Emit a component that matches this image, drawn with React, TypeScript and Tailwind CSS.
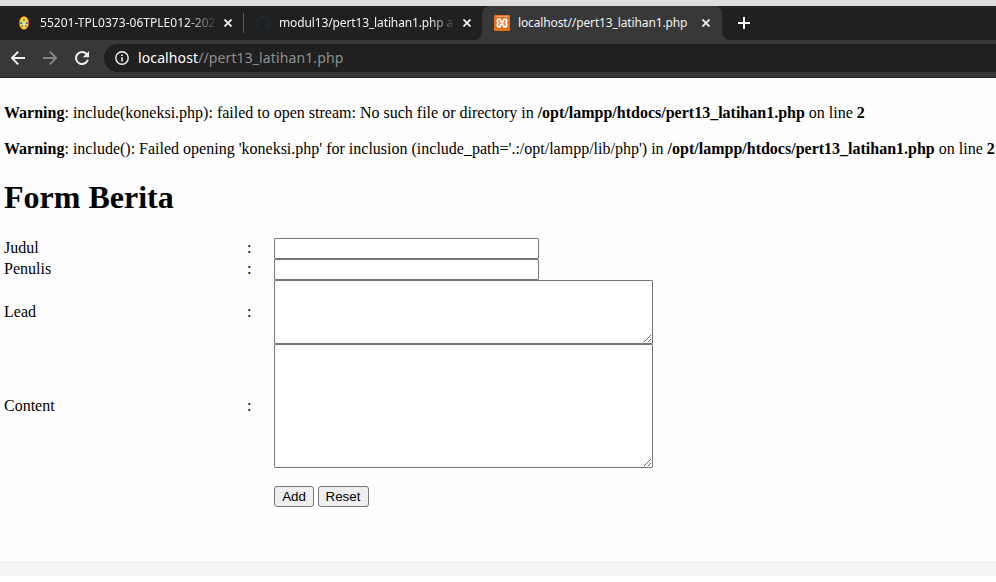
import React from "react";

function CloseIcon() {
  return (
    <svg width="8" height="8" viewBox="0 0 8 8" className="shrink-0">
      <path d="M0.5 0.5 7.5 7.5M7.5 0.5 0.5 7.5" stroke="#f1f1f1" strokeWidth="1.8" fill="none" />
    </svg>
  );
}

function CampusIcon() {
  return (
    <svg width="12" height="16" viewBox="0 0 12 16" className="shrink-0">
      <ellipse cx="6" cy="8" rx="4.8" ry="6.6" fill="#f7e60a" stroke="#cf4526" strokeWidth="0.9" />
      <path d="M6 3.2 8 5.4 10 8 8 10.8 6 13 4 10.8 2 8 4 5.4Z" fill="#d5dc8a" />
      <rect x="5" y="4" width="2" height="1.6" fill="#6d64a8" />
      <rect x="2" y="7.2" width="2" height="1.8" fill="#6a6fb8" />
      <rect x="8" y="7.2" width="2" height="1.8" fill="#6a6fb8" />
      <rect x="3.2" y="10.6" width="1.8" height="1.6" fill="#86708f" />
      <rect x="7" y="10.6" width="1.8" height="1.6" fill="#86708f" />
      <circle cx="6" cy="8" r="1.4" fill="#c5e36a" />
    </svg>
  );
}

function GithubIcon() {
  return (
    <svg width="16" height="16" viewBox="0 0 16 16" className="shrink-0">
      <path
        fill="#20282e"
        d="M8 0C3.58 0 0 3.58 0 8c0 3.54 2.29 6.53 5.47 7.59.4.07.55-.17.55-.38 0-.19-.01-.82-.01-1.49-2.01.37-2.53-.49-2.69-.94-.09-.23-.48-.94-.82-1.13-.28-.15-.68-.52-.01-.53.63-.01 1.08.58 1.23.82.72 1.21 1.87.87 2.33.66.07-.52.28-.87.51-1.07-1.78-.2-3.64-.89-3.64-3.95 0-.87.31-1.59.82-2.15-.08-.2-.36-1.02.08-2.12 0 0 .67-.21 2.2.82.64-.18 1.32-.27 2-.27s1.36.09 2 .27c1.53-1.04 2.2-.82 2.2-.82.44 1.1.16 1.92.08 2.12.51.56.82 1.27.82 2.15 0 3.07-1.87 3.75-3.65 3.95.29.25.54.73.54 1.48 0 1.07-.01 1.93-.01 2.2 0 .21.15.46.55.38A8.01 8.01 0 0 0 16 8c0-4.42-3.58-8-8-8Z"
      />
    </svg>
  );
}

function XamppIcon() {
  return (
    <svg width="16" height="16" viewBox="0 0 16 16" className="shrink-0">
      <rect width="16" height="16" rx="1" fill="#ea6c1d" />
      <path d="M2 1.4h12" stroke="#f7b98f" strokeWidth="0.8" />
      <path
        d="M6.6 6.2C6.6 4.8 6 4.2 5.1 4.2 2.9 4.2 2.7 7 4.3 8.1 2.7 9.2 2.9 12 5.1 12 6 12 6.6 11.4 6.6 10M9.4 6.2C9.4 4.8 10 4.2 10.9 4.2 13.1 4.2 13.3 7 11.7 8.1 13.3 9.2 13.1 12 10.9 12 10 12 9.4 11.4 9.4 10M6.2 6.4C6.6 7.2 9.4 7.2 9.8 6.4M6.2 9.8C6.6 9 9.4 9 9.8 9.8"
        fill="none"
        stroke="#fff"
        strokeWidth="1.8"
        strokeLinejoin="round"
      />
    </svg>
  );
}

function TabBar() {
  return (
    <div className="flex h-[34px] items-center bg-[#202020] text-[12px] leading-[16px] tracking-[-0.13px] text-[#f1f1f1]">
      <div className="flex w-[243px] shrink-0 items-center pl-[18px]">
        <CampusIcon />
        <span className="ml-[10px] w-[176px] whitespace-nowrap tracking-[0.02px] [mask-image:linear-gradient(to_right,black_146px,transparent_178px)]">
          55201-TPL0373-06TPLE012-202
        </span>
        <span className="ml-2 flex"><CloseIcon /></span>
      </div>
      <div className="h-5 w-px shrink-0 bg-[#5a5a5a]" />
      <div className="flex w-[238px] shrink-0 items-center pl-[11px]">
        <GithubIcon />
        <span className="ml-2 w-[176px] whitespace-nowrap [mask-image:linear-gradient(to_right,black_150px,transparent_178px)]">
          modul13/pert13_latihan1.php a
        </span>
        <span className="ml-[8px] flex"><CloseIcon /></span>
      </div>
      <div className="relative flex h-full w-[240px] shrink-0 items-center rounded-t-[8px] bg-[#383838] pl-3">
        <div className="absolute bottom-0 -left-2 size-2 bg-[radial-gradient(circle_at_0_0,#202020_7.5px,#383838_8.5px)]" />
        <div className="absolute -right-2 bottom-0 size-2 bg-[radial-gradient(circle_at_100%_0,#202020_7.5px,#383838_8.5px)]" />
        <XamppIcon />
        <span className="ml-2 w-[176px] whitespace-nowrap">localhost//pert13_latihan1.php</span>
        <span className="ml-2 flex"><CloseIcon /></span>
      </div>
      <svg width="12" height="12" viewBox="0 0 12 12" className="ml-4 shrink-0">
        <path d="M6 0v12M0 6h12" stroke="#fff" strokeWidth="2" />
      </svg>
    </div>
  );
}

function Toolbar() {
  return (
    <div className="flex h-[38px] items-start border-b border-[#242424] bg-[#383838] pt-1">
      <div className="flex h-7 w-[104px] shrink-0 items-center pl-[11px]">
        <svg width="14" height="14" viewBox="0 0 14 14">
          <path d="M14 7H1M7.2.7.9 7l6.3 6.3" fill="none" stroke="#f1f1f1" strokeWidth="1.9" />
        </svg>
        <svg width="14" height="14" viewBox="0 0 14 14" className="ml-[18px]">
          <path d="M0 7h13M6.8.7 13.1 7l-6.3 6.3" fill="none" stroke="#868686" strokeWidth="1.9" />
        </svg>
        <svg width="14" height="14" viewBox="0 0 14 14" className="ml-[18px]">
          <path d="M11.5 3A6 6 0 1 0 12.8 8.7" fill="none" stroke="#f1f1f1" strokeWidth="2" />
          <path d="M14 0v6.2H7.8Z" fill="#f1f1f1" />
        </svg>
      </div>
      <div className="flex h-7 flex-1 items-center rounded-l-full bg-[#202020] pl-[11px] text-[14px] leading-[20px] text-white">
        <svg width="14" height="14" viewBox="0 0 14 14">
          <circle cx="7" cy="7" r="6.2" fill="none" stroke="#f1f1f1" strokeWidth="1.4" />
          <path d="M7 6.2v4.2M7 3.4v1.5" stroke="#f1f1f1" strokeWidth="1.6" />
        </svg>
        <span className="ml-[9px] whitespace-nowrap tracking-[0.11px]">
          localhost<span className="text-[#8f8f8f]">//pert13_latihan1.php</span>
        </span>
      </div>
    </div>
  );
}

const fieldClass = "block border border-[#767676] bg-white rounded-[1px] outline-none";

function Row({ label, children }: { label: string; children: React.ReactNode }) {
  return (
    <div className="flex items-center">
      <div className="w-[243px] pb-px">{label}</div>
      <div className="w-[27px] pb-px">:</div>
      {children}
    </div>
  );
}

function Page() {
  return (
    <main className="h-[483px] bg-[#fefefe] pt-[26px] pl-1 font-['Liberation_Serif',serif] text-[16px] leading-[18px] text-black">
      <p className="whitespace-nowrap">
        <b>Warning</b>: include(koneksi.php): failed to open stream: No such file or directory in{" "}
        <b>/opt/lampp/htdocs/pert13_latihan1.php</b> on line <b>2</b>
      </p>
      <p className="mt-[18px] whitespace-nowrap">
        <b>Warning</b>: include(): Failed opening 'koneksi.php' for inclusion (include_path='.:/opt/lampp/lib/php') in{" "}
        <b>/opt/lampp/htdocs/pert13_latihan1.php</b> on line <b>2</b>
      </p>
      <h1 className="mt-[21px] text-[32px] leading-[37px] font-bold">Form Berita</h1>
      <form className="mt-[22px]">
        <Row label="Judul"><input className={`${fieldClass} h-[21px] w-[265px]`} /></Row>
        <Row label="Penulis"><input className={`${fieldClass} h-[21px] w-[265px]`} /></Row>
        <Row label="Lead"><textarea className={`${fieldClass} h-16 w-[379px] resize`} /></Row>
        <Row label="Content"><textarea className={`${fieldClass} h-[124px] w-[379px] resize`} /></Row>
        <div className="mt-[18px] flex gap-1 pl-[270px] font-['Liberation_Sans',sans-serif] text-[13.333px] leading-[15px]">
          <button type="button" className="h-[21px] w-10 rounded-[3px] border border-[#767676] bg-[#efefef]">Add</button>
          <button type="reset" className="h-[21px] w-[51px] rounded-[3px] border border-[#767676] bg-[#efefef] pr-px">Reset</button>
        </div>
      </form>
    </main>
  );
}

export default function App() {
  return (
    <div className="h-[582px] w-[996px] overflow-hidden bg-white font-['Noto_Sans',sans-serif]">
      <div className="h-1.5 bg-[#dedede]" />
      <TabBar />
      <Toolbar />
      <Page />
      <div className="h-[15px] bg-[#f4f4f4]" />
    </div>
  );
}
